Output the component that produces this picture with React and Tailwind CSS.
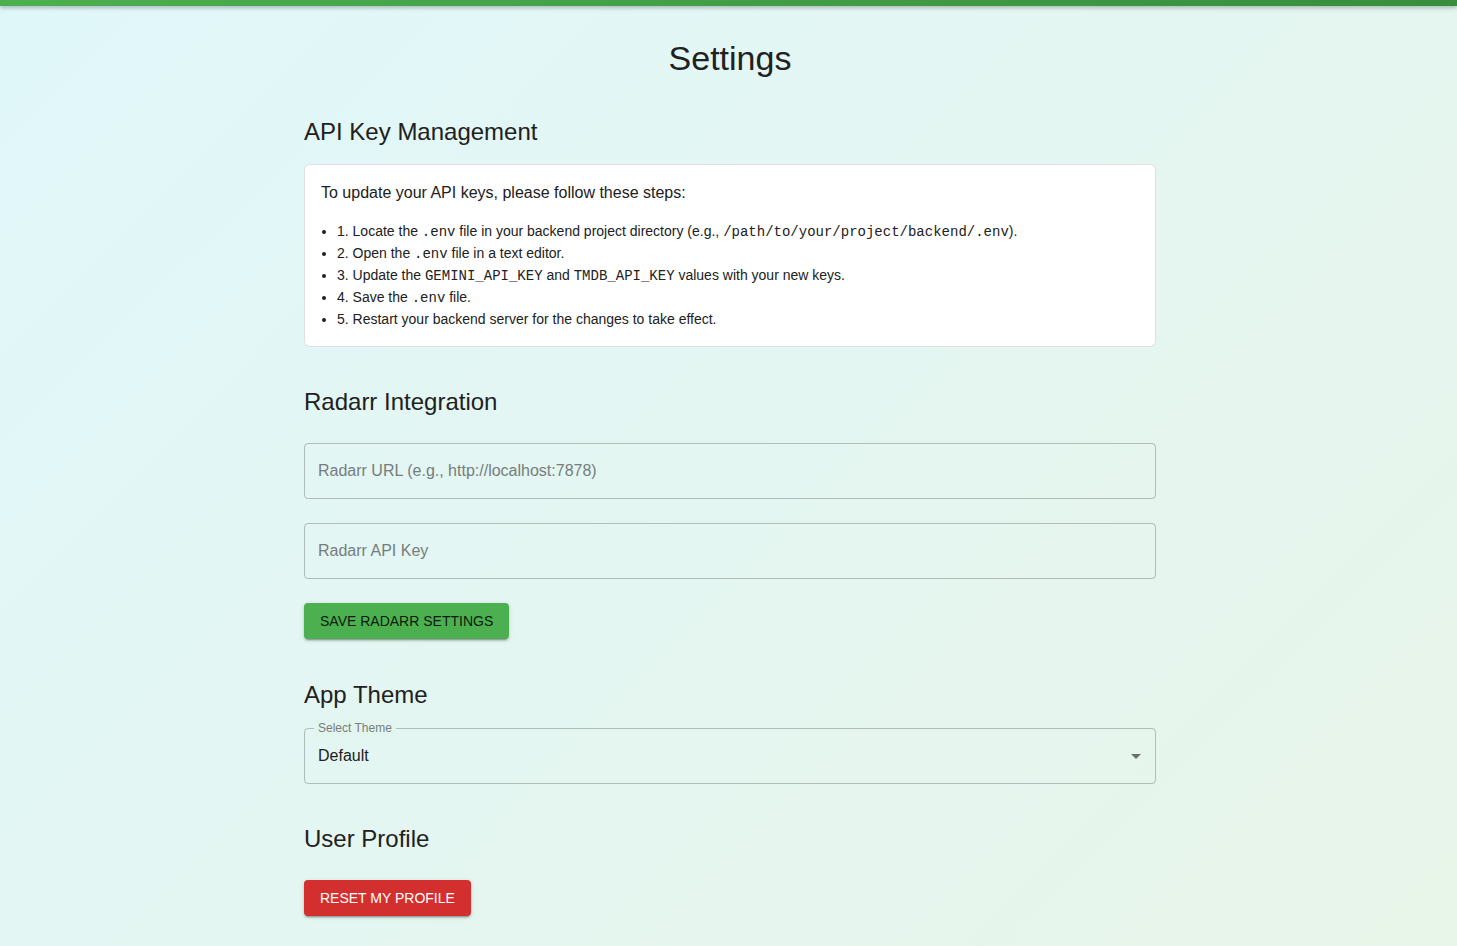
export default function App() {
  const sans = { fontFamily: '"Liberation Sans", Arial, sans-serif' };
  const code = "font-['Liberation_Mono',monospace] text-[14px] leading-[14px]";
  const shadow = "shadow-[0_3px_1px_-2px_rgba(0,0,0,0.2),0_2px_2px_0_rgba(0,0,0,0.14),0_1px_5px_0_rgba(0,0,0,0.12)]";
  return (
    <div style={sans} className="min-h-screen bg-[linear-gradient(135deg,#e0f7fa_0%,#e8f5e9_100%)] text-[#212121]">
      <div className="h-[6px] bg-[linear-gradient(90deg,#4caf50,#388e3c)] shadow-[0_2px_4px_rgba(0,0,0,0.25)]" />
      <div className="pl-[3px]">
        <div className="w-[852px] mx-auto flex flex-col">
          <h1 className="mt-[31px] text-[34px] leading-[42px] text-center">Settings</h1>

          <h2 className="mt-[37px] text-[24px] leading-[32px]">API Key Management</h2>
          <div className="mt-[16px] bg-white border border-[rgba(0,0,0,0.12)] rounded-[6px] p-[16px]">
            <p className="text-[16px] leading-[24px]">To update your API keys, please follow these steps:</p>
            <ul className="mt-[15px] list-disc pl-[16px] text-[14px] leading-[22px]">
              <li className="h-[22px]">1. Locate the <code className={code}>.env</code> file in your backend project directory (e.g., <code className={code}>/path/to/your/project/backend/.env</code>).</li>
              <li className="h-[22px]">2. Open the <code className={code}>.env</code> file in a text editor.</li>
              <li className="h-[22px]">3. Update the <code className={code}>GEMINI_API_KEY</code> and <code className={code}>TMDB_API_KEY</code> values with your new keys.</li>
              <li className="h-[22px]">4. Save the <code className={code}>.env</code> file.</li>
              <li className="h-[22px]">5. Restart your backend server for the changes to take effect.</li>
            </ul>
          </div>

          <h2 className="mt-[39px] text-[24px] leading-[32px]">Radarr Integration</h2>
          <input
            placeholder="Radarr URL (e.g., http://localhost:7878)"
            className="mt-[25px] h-[56px] w-full px-[13px] bg-transparent border border-[rgba(0,0,0,0.23)] rounded-[4px] text-[16px] outline-none placeholder:text-[#767d7c]"
          />
          <input
            placeholder="Radarr API Key"
            className="mt-[24px] h-[56px] w-full px-[13px] bg-transparent border border-[rgba(0,0,0,0.23)] rounded-[4px] text-[16px] outline-none placeholder:text-[#767d7c]"
          />
          <div className="mt-[24px]">
            <button className={`h-[36px] px-[16px] bg-[#4caf50] text-[rgba(0,0,0,0.87)] text-[14px] uppercase rounded-[4px] ${shadow}`}>
              Save Radarr Settings
            </button>
          </div>

          <h2 className="mt-[40px] text-[24px] leading-[32px]">App Theme</h2>
          <div className="mt-[17px] relative h-[56px] border border-[rgba(0,0,0,0.23)] rounded-[4px] flex items-center px-[13px]">
            <span className="absolute -top-[9px] left-[9px] px-[4px] text-[12px] leading-[16px] text-[#767d7c] bg-[#e3f5ef]">Select Theme</span>
            <span className="text-[16px]">Default</span>
            <svg className="absolute right-[7px] top-[15px]" width="24" height="24" viewBox="0 0 24 24">
              <path d="M7 10l5 5 5-5z" fill="rgba(0,0,0,0.54)" />
            </svg>
          </div>

          <h2 className="mt-[39px] text-[24px] leading-[32px]">User Profile</h2>
          <div className="mt-[25px]">
            <button className={`h-[36px] px-[16px] bg-[#d32f2f] text-white text-[14px] uppercase rounded-[4px] ${shadow}`}>
              Reset My Profile
            </button>
          </div>
          <div className="h-[30px]" />
        </div>
      </div>
    </div>
  );
}
